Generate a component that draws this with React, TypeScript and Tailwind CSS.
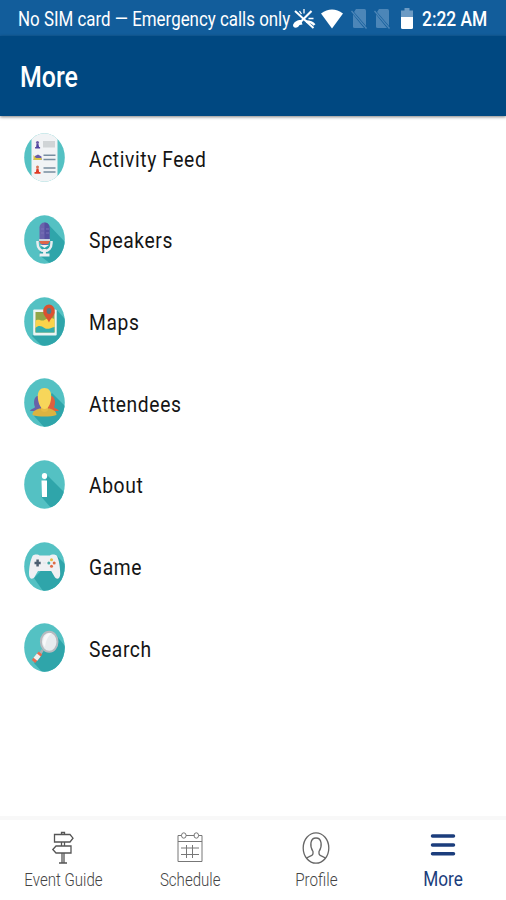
import React from 'react';

interface MenuItem {
  label: string;
  icon: React.ReactNode;
}

const Disc: React.FC<{ id: string; shadow?: string; children: React.ReactNode }> = ({ id, shadow, children }) => (
  <svg viewBox="0 0 41 49" className="h-[49px] w-[41px] shrink-0">
    <clipPath id={id}>
      <ellipse cx="20.5" cy="24.5" rx="20.3" ry="24.2" />
    </clipPath>
    <g clipPath={`url(#${id})`}>
      <rect width="41" height="49" fill="#54c1c3" />
      {shadow && <path d={shadow} fill="#2fa5aa" />}
      {children}
    </g>
  </svg>
);

const FeedIcon = () => (
  <Disc id="feed">
    <rect x="7.5" width="26" height="49" fill="#f1f3f5" />
    <circle cx="13.5" cy="9.5" r="1.5" fill="#6a5ca8" />
    <path d="M12.5 11h2l.6 3h1v1.5h-5V14h1z" fill="#5145a0" />
    <rect x="19" y="8" width="12" height="6.5" fill="#d0d4d6" />
    <path d="M9.5 27l1.5-4 3-1.5 3.5 2V27z" fill="#6a5ca8" />
    <path d="M9.5 27v-5l2.5 3h5.5v2z" fill="#d9c548" />
    <path d="M19.5 22.3h12M19.5 26.5h12M19.5 35h12M19.5 39h12" stroke="#778d9f" strokeWidth="1.4" />
    <circle cx="13.5" cy="34" r="1.5" fill="#d8795a" />
    <path d="M12.5 35.5h2l.6 3.5h1.4v1.8h-6V39h1.4z" fill="#df3b25" />
  </Disc>
);

const SpeakerIcon = () => (
  <Disc id="speaker" shadow="M24 9L41 27V49H27L15 40z">
    <path d="M13.5 26v2c0 5 3 8 7 8s7-3 7-8v-2" fill="none" stroke="#e8edf0" strokeWidth="2.5" />
    <rect x="15.5" y="7.5" width="10" height="23" rx="5" fill="#6a63ac" />
    <path d="M20.5 7.5c4 0 5 3 5 6V25h-5z" fill="#5550a0" />
    <path d="M17 14h3M17 18h3M22 14h3M22 18h3" stroke="#7a73b8" strokeWidth="1" />
    <path d="M15 24h11v2H15z" fill="#c9d4df" />
    <path d="M15 26h11l-2 3h-7z" fill="#df6548" />
    <path d="M16 30h9l-4.5 3z" fill="#eef1f3" />
    <path d="M20.5 34v5M15.5 40h10" stroke="#edf0f2" strokeWidth="2.8" />
  </Disc>
);

const MapIcon = () => (
  <Disc id="map" shadow="M32 12L41 22V49H18L8 39z">
    <rect x="9.2" y="12.5" width="23.5" height="26" rx="1" fill="#edf4f3" />
    <rect x="11.5" y="15" width="19" height="20.5" fill="#91a64a" />
    <path d="M11.5 24c3-3 6 1 9-1s6-3 10-1v13h-19z" fill="#fbd34b" />
    <path d="M11.5 31c3-3 6-2 9 0s6 0 10-1v5.5h-19z" fill="#36aead" />
    <path d="M25 25.5c-2-5-5.8-6.5-5.8-11.5 0-3.5 2.5-6.5 5.8-6.5s5.8 3 5.8 6.5c0 5-3.8 6.5-5.8 11.5z" fill="#db5131" />
    <ellipse cx="25" cy="14" rx="2.4" ry="3" fill="#547a88" />
  </Disc>
);

const AttendeesIcon = () => (
  <Disc id="attendees" shadow="M28 15L41 28V49H20L10 38z">
    <path d="M6 33c1-2.5 4-2 5-4-2-4-1-11 3-11h4v15z" fill="#6862a7" />
    <path d="M35 33c-1-2.5-4-2-5-4 2-4 1-11-3-11h-4v15z" fill="#df603f" />
    <path d="M8.5 37c0-4 3-5 7-6.5h10c4 1.5 7 2.5 7 6.5-6 2-18 2-24 0z" fill="#dbb340" />
    <path d="M17 25h7v7c-1 2.5-6 2.5-7 0z" fill="#e7bb43" />
    <path d="M20.5 10c4.3 0 6.7 3.5 6.7 8 0 6-2.2 13-6.7 13s-6.7-7-6.7-13c0-4.500 2.400-8 6.700-8z" fill="#f7d65a" />
  </Disc>
);

const AboutIcon = () => (
  <Disc id="about" shadow="M23 15L41 33V49H28L17.5 37z">
    <ellipse cx="20.5" cy="16" rx="2.7" ry="3" fill="#fff" />
    <path d="M17.5 20.5H23V37h-5z" fill="#fff" />
  </Disc>
);

const GameIcon = () => (
  <Disc id="game" shadow="M32 13L41 22V49H19L10 36z">
    <path d="M8.5 14c1-2 6-2 7-.5H26c1-1.5 6-1.5 7 .5 2 4 3.2 11 3.2 18 0 5-3.500 6-5.500 3l-3.500-6H14l-3.500 6c-2 3-5.500 2-5.500-3 0-7 1.500-14 3.500-18z" fill="#eff0f3" />
    <path d="M13.6 17.5v7M10.5 21h6.2" stroke="#4c5e70" strokeWidth="2.5" />
    <circle cx="27.5" cy="17.8" r="1.5" fill="#e3bb40" />
    <circle cx="24.8" cy="21" r="1.5" fill="#42aaa5" />
    <circle cx="30.2" cy="21" r="1.5" fill="#e06a45" />
    <circle cx="27.5" cy="24.2" r="1.5" fill="#e06a45" />
    <path d="M19 21h3" stroke="#dfe2e6" strokeWidth="1" />
  </Disc>
);

const SearchIcon = () => (
  <Disc id="search" shadow="M32 12L41 23V49H18L10 40z">
    <path d="M18.5 27l-3 5" stroke="#aab2b6" strokeWidth="2.5" />
    <path d="M16.5 30l-7 8.5" stroke="#e76c50" strokeWidth="4.5" />
    <path d="M14.8 32l-3.4 4.2" stroke="#edf1f0" strokeWidth="4.8" />
    <ellipse cx="25.2" cy="18.7" rx="8.3" ry="10" fill="#e8ecee" stroke="#b6bbc0" strokeWidth="2" />
    <path d="M19 21c0-8 3-11 9-11-4 3-6 7-7 14z" fill="#f8f9fa" />
  </Disc>
);

const menu: MenuItem[] = [
  { label: 'Activity Feed', icon: <FeedIcon /> },
  { label: 'Speakers', icon: <SpeakerIcon /> },
  { label: 'Maps', icon: <MapIcon /> },
  { label: 'Attendees', icon: <AttendeesIcon /> },
  { label: 'About', icon: <AboutIcon /> },
  { label: 'Game', icon: <GameIcon /> },
  { label: 'Search', icon: <SearchIcon /> },
];

const NoSim = () => (
  <svg viewBox="0 0 17 22" className="h-[22px] w-[17px] shrink-0">
    <path d="M5 1h8.5Q15 1 15 2.5V18L3 4z" fill="#4c86b8" />
    <path d="M2 6.5L13 20H3.5Q2 20 2 18.5z" fill="#4c86b8" />
    <path d="M.5 3L15.5 20.5" stroke="#4c86b8" strokeWidth="1.3" />
  </svg>
);

const StatusBar = () => (
  <div className="flex h-[36px] shrink-0 items-center bg-[#125d9b] pt-[2px] text-white">
    <div className="ml-[18px] w-[272px] shrink-0">
      <span className="inline-block origin-left scale-x-[0.845] text-[20px] leading-[26px] whitespace-nowrap">
        No SIM card — Emergency calls only
      </span>
    </div>
    <svg viewBox="0 0 24 22" className="ml-[2px] h-[22px] w-[24px] shrink-0" fill="none" stroke="#fff">
      <path d="M1 17c1-3 4-5 8-5l1.5 4.5-3 .5c-1 3-6.5 4-6.5 0z" fill="#fff" stroke="none" />
      <path d="M8 14.5L19.5 3" strokeWidth="2.2" />
      <path d="M3 3l18.5 17" strokeWidth="2" />
      <path d="M14 13.5c4 0 7 1.5 8.5 3.5" strokeWidth="2.4" />
      <path d="M12 1v4.5M7.5 3l2 3M16.5 10.5h5" strokeWidth="1.3" />
    </svg>
    <svg viewBox="0 0 22 20" className="ml-[5px] h-[20px] w-[22px] shrink-0">
      <path d="M0 4.5Q11-3.5 22 4.5L11 19.5z" fill="#fff" />
    </svg>
    <div className="ml-[8px] flex gap-[6px]">
      <NoSim />
      <NoSim />
    </div>
    <svg viewBox="0 0 12 22" className="ml-[10px] h-[22px] w-[12px] shrink-0">
      <path d="M3.5 0h5v2.5H12V10H0V2.5h3.5z" fill="#6d9bc4" />
      <path d="M0 9h12v10.5q0 1.5-1.5 1.5h-9Q0 21 0 19.5z" fill="#fff" />
    </svg>
    <div className="ml-[9px] w-[70px]">
      <span className="inline-block origin-left scale-x-[0.87] text-[20px] leading-[26px] font-medium whitespace-nowrap">
        2:22 AM
      </span>
    </div>
  </div>
);

const TabBar = () => (
  <nav className="grid h-[84px] grid-cols-4 border-t-4 border-[#f8f8f8] bg-white text-[#444]">
    <div className="flex flex-col items-center pt-[11px]">
      <svg viewBox="0 0 24 34" className="h-[34px] w-[24px]" fill="none" stroke="#555" strokeWidth="1.3">
        <path d="M3.5 3.5H19l3 3.7-3 3.8H3.5zM20 15H5l-3.2 3.5L5 22h15zM10.5 3.5V1.5h3v2M10.5 11v4M13.5 11v4M11 22v9.5M13 22v9.5M8 32h8" />
      </svg>
      <span className="mt-[4px] scale-x-[0.86] text-[17.5px] leading-[22px] font-light whitespace-nowrap">Event Guide</span>
    </div>
    <div className="flex flex-col items-center pt-[11px]">
      <svg viewBox="0 0 28 34" className="h-[34px] w-[28px]" fill="none" stroke="#777" strokeWidth="1">
        <path d="M5.5 4.5H2v26h24v-26h-3.5M10 4.5h8.5M2 10.5h24" />
        <ellipse cx="7.8" cy="4.5" rx="2.3" ry="2.7" />
        <ellipse cx="20.3" cy="4.5" rx="2.3" ry="2.7" />
        <path d="M5 17h18M5 23.5h18M10.5 14v13M16.5 14v13" />
      </svg>
      <span className="mt-[4px] scale-x-[0.86] text-[17.5px] leading-[22px] font-light whitespace-nowrap">Schedule</span>
    </div>
    <div className="flex flex-col items-center pt-[11px]">
      <svg viewBox="0 0 28 34" className="h-[34px] w-[28px]" fill="none" stroke="#666" strokeWidth="1.3">
        <ellipse cx="14" cy="17" rx="12.8" ry="15.2" />
        <path d="M4.5 27.5c1-2.5 6.5-2 6.5-5v-2c-3.5-5-3-13.5 3-13.5s6.5 8.5 3 13.5v2c0 3 5.5 2.5 6.5 5" />
      </svg>
      <span className="mt-[4px] scale-x-[0.87] text-[17.5px] leading-[22px] font-light whitespace-nowrap">Profile</span>
    </div>
    <div className="flex flex-col items-center pt-[11px] text-[#1b3d7c]">
      <svg viewBox="0 0 26 34" className="h-[34px] w-[26px]" stroke="#1b3d7c" strokeWidth="3.5" strokeLinecap="round">
        <path d="M2.5 5h21M2.5 14h21M2.5 22.7h21" />
      </svg>
      <span className="mt-[1px] scale-x-[0.86] text-[20px] leading-[26px] whitespace-nowrap">More</span>
    </div>
  </nav>
);

const App: React.FC = () => {
  return (
    <div className="flex h-[900px] w-[506px] flex-col overflow-hidden bg-white font-['Roboto',sans-serif]">
      <StatusBar />
      <header className="z-10 flex h-[80px] shrink-0 items-center bg-[#004881] pt-[3px] pl-[20px] shadow-[0_1px_3px_rgba(0,0,0,0.5)]">
        <h1 className="origin-left scale-x-[0.86] text-[29px] leading-none font-medium text-white">More</h1>
      </header>
      <ul className="flex-1 pt-[1px]">
        {menu.map((item) => (
          <li key={item.label} className="flex h-[81.7px] items-center pl-[24px]">
            {item.icon}
            <span className="mt-[2px] ml-[24px] origin-left scale-x-[0.86] text-[22.4px] leading-none tracking-[0.7px] whitespace-nowrap text-[#151515]">
              {item.label}
            </span>
          </li>
        ))}
      </ul>
      <TabBar />
    </div>
  );
};

export default App;
